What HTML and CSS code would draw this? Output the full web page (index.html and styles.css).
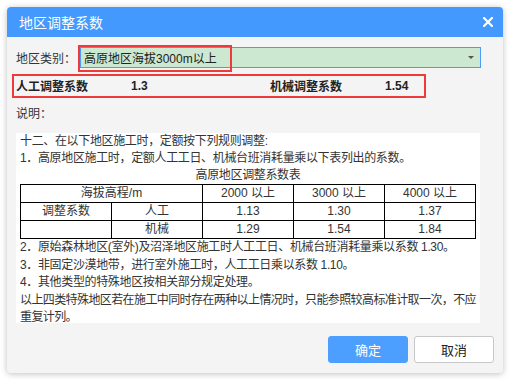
FILE: index.html
```html
<!DOCTYPE html>
<html lang="zh-CN">
<head>
    <meta charset="UTF-8">
    <title>地区调整系数</title>
    <link rel="stylesheet" href="styles.css">
</head>
<body>
    <!-- 地区调整系数 dialog -->
    <div class="dialog">
        <div class="dialog-header">
            <span class="dialog-title">地区调整系数</span>
            <svg class="close-icon" width="10" height="10" viewBox="0 0 10 10">
                <path d="M1 1 L9 9 M9 1 L1 9" stroke="#fff" stroke-width="2.2" stroke-linecap="square"/>
            </svg>
        </div>

        <div class="dialog-body">
            <div class="region-row">
                <label class="region-label">地区类别：</label>
                <div class="region-select">
                    <span>高原地区海拔3000m以上</span>
                    <i class="select-arrow"></i>
                </div>
            </div>

            <div class="coef-row">
                <span>人工调整系数</span>
                <span>1.3</span>
                <span>机械调整系数</span>
                <span>1.54</span>
            </div>

            <div class="desc-label">说明：</div>

            <div class="desc-box">
                <p class="intro">十二、在以下地区施工时，定额按下列规则调整:</p>
                <p class="intro">1．高原地区施工时，定额人工工日、机械台班消耗量乘以下表列出的系数。</p>
                <p class="intro caption">高原地区调整系数表</p>
                <table class="coef-table">
                    <tr>
                        <td colspan="2">海拔高程/m</td>
                        <td>2000 以上</td>
                        <td>3000 以上</td>
                        <td>4000 以上</td>
                    </tr>
                    <tr>
                        <td>调整系数</td>
                        <td>人工</td>
                        <td>1.13</td>
                        <td>1.30</td>
                        <td>1.37</td>
                    </tr>
                    <tr>
                        <td></td>
                        <td>机械</td>
                        <td>1.29</td>
                        <td>1.54</td>
                        <td>1.84</td>
                    </tr>
                </table>
                <p class="note">2．原始森林地区(室外)及沼泽地区施工时人工工日、机械台班消耗量乘以系数 1.30。</p>
                <p class="note">3．非固定沙漠地带，进行室外施工时，人工工日乘以系数 1.10。</p>
                <p class="note">4．其他类型的特殊地区按相关部分规定处理。</p>
                <p class="note note-last">以上四类特殊地区若在施工中同时存在两种以上情况时，只能参照较高标准计取一次，不应重复计列。</p>
            </div>

            <div class="btn-container">
                <button type="button" class="ok-btn">确定</button>
                <button type="button" class="cancel-btn">取消</button>
            </div>
        </div>

        <!-- red annotation frames -->
        <div class="mark mark-select"></div>
        <div class="mark mark-coef"></div>
    </div>
</body>
</html>
```

FILE: styles.css
```css
/* CSS Styles */
body {
    margin: 0;
    padding: 7px;
    background: #ffffff;
    font-family: 'Liberation Sans', 'Noto Sans CJK SC', sans-serif;
    font-size: 12px;
    color: #333;
}

.dialog {
    position: relative;
    width: 496px;
    height: 366px;
    background: #f4f4f4;
    border-radius: 4px;
    box-shadow: 0 1px 6px rgba(0, 0, 0, 0.25);
    overflow: hidden;
    display: flex;
    flex-direction: column;
}

.dialog-header {
    height: 30px;
    flex-shrink: 0;
    background: #4499ff;
    display: flex;
    justify-content: space-between;
    align-items: center;
    padding: 0 10px 0 12px;
}

.dialog-title {
    color: #fff;
    font-size: 14px;
}

.close-icon {
    display: block;
    margin-top: -1px;
}

.dialog-body {
    padding: 10px 22px 10px 9px;
    display: flex;
    flex-direction: column;
}

.region-row {
    display: flex;
    align-items: center;
    height: 21px;
}

.region-label {
    width: 64px;
    flex-shrink: 0;
}

.region-select {
    flex: 1;
    height: 21px;
    box-sizing: border-box;
    border: 1px solid #4a9bff;
    background: #cde8d0;
    display: flex;
    align-items: center;
    justify-content: space-between;
    padding: 0 6px 0 3px;
    color: #222;
}

.select-arrow {
    width: 0;
    height: 0;
    border-left: 3px solid transparent;
    border-right: 3px solid transparent;
    border-top: 3px solid #555;
}

.coef-row {
    margin-top: 6px;
    height: 23px;
    display: grid;
    grid-template-columns: 115px 139px 115px auto;
    align-items: center;
    font-weight: bold;
    color: #222;
}

.desc-label {
    margin-top: 8px;
    height: 18px;
    line-height: 18px;
}

.desc-box {
    margin-top: 10px;
    width: 464px;
    height: 190px;
    box-sizing: border-box;
    background: #fff;
    padding: 0 0 0 4px;
    overflow: hidden;
    letter-spacing: -0.35px;
}

.desc-box p {
    margin: 0;
}

.intro {
    line-height: 17px;
}

.caption {
    text-align: center;
    width: 456px;
}

.note {
    line-height: 17.5px;
}

.note-last {
    letter-spacing: -0.6px;
}

.coef-table {
    width: 456px;
    border-collapse: collapse;
    table-layout: fixed;
    letter-spacing: 0;
}

.coef-table td {
    border: 1px solid #000;
    height: 17px;
    padding: 0;
    line-height: 17px;
    text-align: center;
}

.btn-container {
    margin-top: 13px;
    display: flex;
    justify-content: flex-end;
    gap: 6px;
    margin-right: -13px;
}

button {
    width: 80px;
    height: 27px;
    border-radius: 3px;
    font-family: 'Liberation Sans', 'Noto Sans CJK SC', sans-serif;
    font-size: 13px;
    cursor: pointer;
}

.ok-btn {
    background: #4c9eff;
    border: 1px solid #4c9eff;
    color: #fff;
}

.cancel-btn {
    background: #fff;
    border: 1px solid #c8c8c8;
    color: #222;
}

.mark {
    position: absolute;
    border: 2px solid #f03a3a;
    box-sizing: border-box;
    pointer-events: none;
}

.mark-select {
    left: 71px;
    top: 38px;
    width: 154px;
    height: 27px;
}

.mark-coef {
    left: 5px;
    top: 67px;
    width: 414px;
    height: 24px;
}
```
